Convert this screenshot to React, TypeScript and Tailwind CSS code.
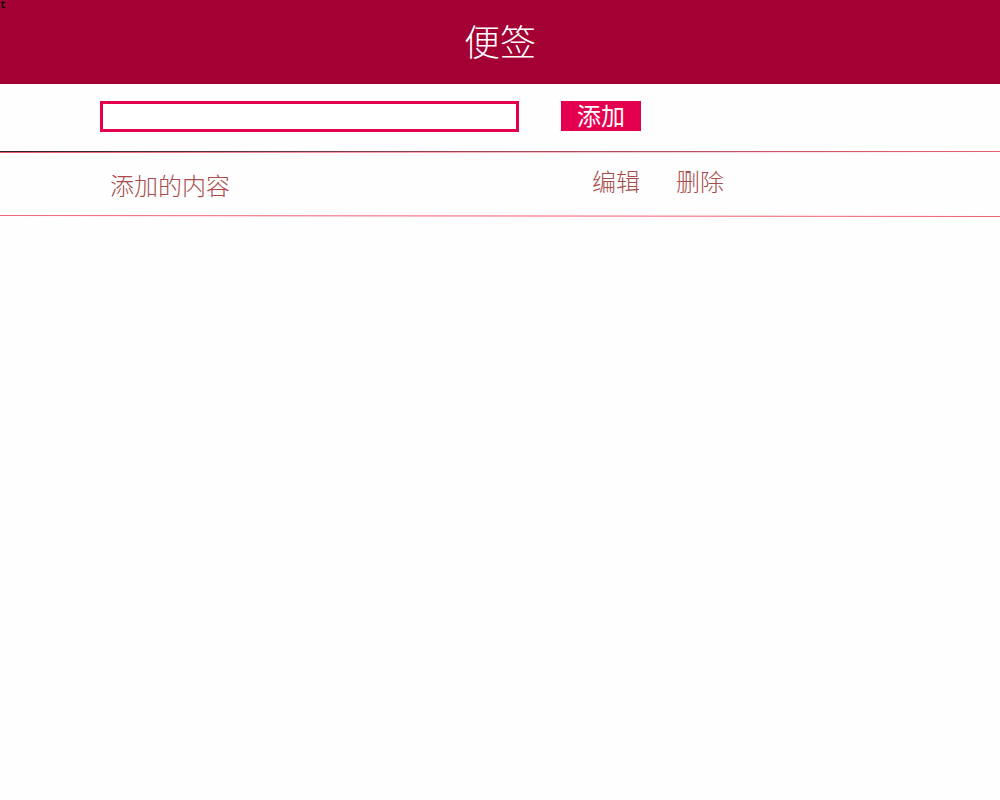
export default function App() {
  return (
    <div className="min-h-screen bg-[#fefefe] font-['Liberation_Sans','Noto_Sans_CJK_SC',sans-serif]">
      <header className="relative flex h-[84px] items-center justify-center bg-[#a30034] pt-1">
        <span className="absolute left-0 top-0 font-['Liberation_Mono',monospace] text-[10px] leading-3 font-bold text-black">t</span>
        <h1 className="text-4xl leading-10 font-light text-white">便签</h1>
      </header>
      <form
        className="flex items-start gap-[42px] pt-[17px] pb-[19px] pl-[100px]"
        onSubmit={(e) => e.preventDefault()}
      >
        <input
          type="text"
          aria-label="便签内容"
          className="h-[31px] w-[419px] border-3 border-[#e5004f] bg-white px-2 outline-none"
        />
        <button type="submit" className="h-[30px] w-20 bg-[#e5004f] pt-px text-2xl leading-7 text-white">
          添加
        </button>
      </form>
      <div className="h-px bg-linear-to-r from-[#2b2028] via-[#a04858] to-[#ea6070]" />
      <div className="h-px bg-linear-to-r from-[#e8586c] via-[#f8b4c0] to-[#fefefe]" />
      <ul>
        <li className="flex pl-[110px] text-2xl leading-8 font-light text-[#a84c4c]">
          <span className="w-[482px] pt-[18px] pb-3">添加的内容</span>
          <div className="flex items-start gap-9 pt-[14px]">
            <button type="button">编辑</button>
            <button type="button">删除</button>
          </div>
        </li>
      </ul>
      <div className="h-px bg-linear-to-r from-[#ee6878] via-[#f8a4b0] to-[#fefefe]" />
      <div className="h-px bg-linear-to-r from-[#fefefe] via-[#f8b0bc] to-[#ec6472]" />
    </div>
  );
}
